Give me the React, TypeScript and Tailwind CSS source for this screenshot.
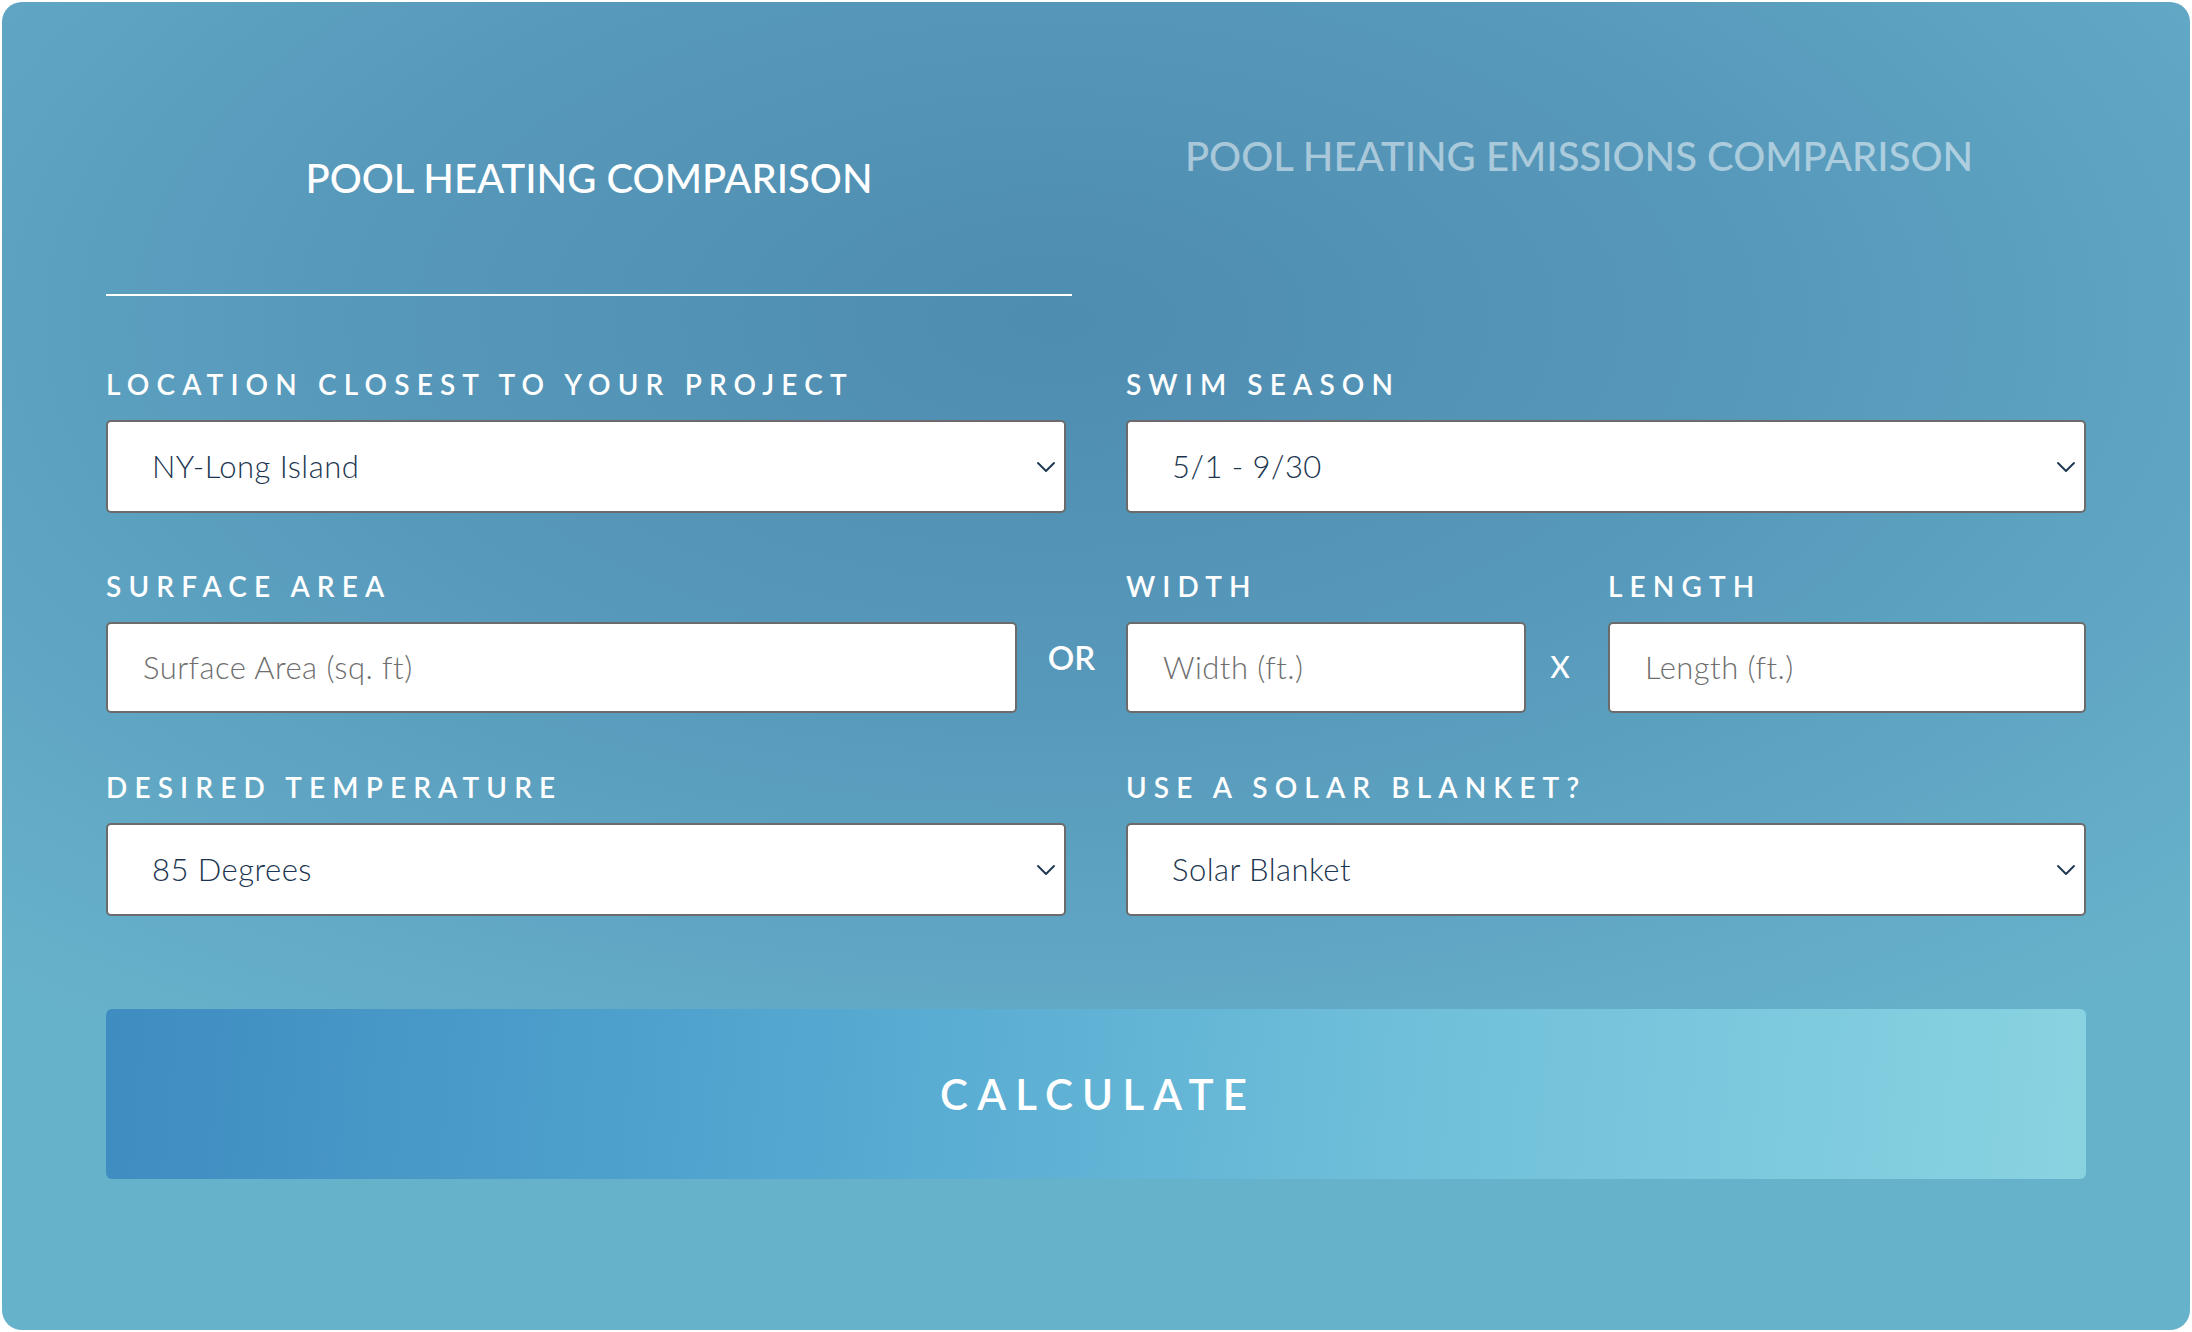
import { ChevronDown } from "lucide-react";

const font = { fontFamily: "Lato, 'Noto Sans', sans-serif" };

function Label({ children }: { children: React.ReactNode }) {
  return (
    <div className="text-[28px] leading-none font-semibold tracking-[0.255em] text-white uppercase h-[28px] mb-[22px] whitespace-nowrap">
      {children}
    </div>
  );
}

function Select({ value }: { value: string }) {
  return (
    <div className="h-[93px] bg-white border-2 border-[#6b6b6b] rounded-[5px] flex items-center justify-between pl-[44px] pr-[2px]">
      <span className="text-[31px] font-light text-[#1c3550] tracking-[0.015em]">{value}</span>
      <ChevronDown size={32} strokeWidth={1.4} className="text-[#1c3550]" />
    </div>
  );
}

function Field({ placeholder }: { placeholder: string }) {
  return (
    <div className="h-[91px] bg-white border-2 border-[#6b6b6b] rounded-[5px] flex items-center pl-[35px]">
      <span className="text-[31px] font-light text-[#6e6e6e] tracking-[0.015em]">{placeholder}</span>
    </div>
  );
}

export default function App() {
  return (
    <div className="w-[2192px] h-[1332px] bg-white p-[2px]" style={font}>
      <div className="w-full h-full rounded-[20px] overflow-hidden bg-[radial-gradient(ellipse_75%_65%_at_48%_24%,#4e8cb0_0%,#5799bb_45%,#62a9c6_80%,#67b2cb_100%)]">
        {/* Tabs */}
        <div className="flex px-[104px] h-[294px]">
          <div className="w-[966px] flex flex-col">
            <div className="pt-[156px] text-center text-[40px] leading-none font-medium text-white whitespace-nowrap">
              POOL HEATING COMPARISON
            </div>
            <div className="mt-auto h-[2px] bg-white" />
          </div>
          <div className="flex-1 pt-[134px] text-center text-[40px] leading-none font-medium text-white/50 whitespace-nowrap">
            POOL HEATING EMISSIONS COMPARISON
          </div>
        </div>

        {/* Form */}
        <div className="px-[104px] pt-[74px]">
          <div className="grid grid-cols-2 gap-x-[60px]">
            <div>
              <Label>Location closest to your project</Label>
              <Select value="NY-Long Island" />
            </div>
            <div>
              <Label>Swim Season</Label>
              <Select value="5/1 - 9/30" />
            </div>
          </div>

          <div className="flex mt-[59px]">
            <div className="w-[911px]">
              <Label>Surface Area</Label>
              <Field placeholder="Surface Area (sq. ft)" />
            </div>
            <div className="w-[109px] flex items-end justify-center pb-[39px] text-[33px] leading-none font-semibold text-white">
              OR
            </div>
            <div className="w-[400px]">
              <Label>Width</Label>
              <Field placeholder="Width (ft.)" />
            </div>
            <div className="w-[82px] flex items-end justify-center pb-[32px] pr-[14px] text-[30px] leading-none font-medium text-white">
              X
            </div>
            <div className="flex-1">
              <Label>Length</Label>
              <Field placeholder="Length (ft.)" />
            </div>
          </div>

          <div className="grid grid-cols-2 gap-x-[60px] mt-[60px]">
            <div>
              <Label>Desired Temperature</Label>
              <Select value="85 Degrees" />
            </div>
            <div>
              <Label>Use a solar blanket?</Label>
              <Select value="Solar Blanket" />
            </div>
          </div>

          <button className="mt-[93px] w-full h-[170px] rounded-[6px] bg-[linear-gradient(95deg,#3f8cc1_0%,#53a7d0_35%,#6fbfda_65%,#89d3e1_100%)] flex items-center justify-center">
            <span className="text-[42px] leading-none font-semibold tracking-[0.22em] text-white pl-[0.1em]">CALCULATE</span>
          </button>
        </div>
      </div>
    </div>
  );
}
